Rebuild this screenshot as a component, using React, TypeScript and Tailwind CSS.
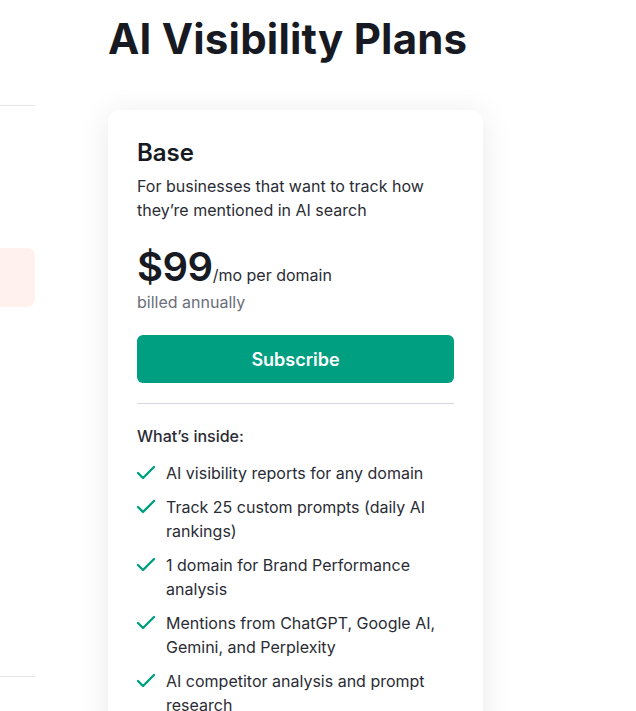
import { Check } from 'lucide-react'

const FEATURES = [
  'AI visibility reports for any domain',
  'Track 25 custom prompts (daily AI rankings)',
  '1 domain for Brand Performance analysis',
  'Mentions from ChatGPT, Google AI, Gemini, and Perplexity',
  'AI competitor analysis and prompt research',
]

export default function App() {
  return (
    <div className="w-[636px] h-[711px] overflow-hidden bg-white text-[#171a22] font-['Inter',sans-serif]">
      <h1 className="pl-[108px] pt-[14px] text-[42px] leading-[50px] font-bold tracking-[0.2px]">
        AI Visibility Plans
      </h1>

      <div className="mt-[41px] flex gap-[73px]">
        {/* edge of the previous card */}
        <div className="w-[35px] shrink-0">
          <div className="h-px bg-[#e4e5ea]" />
          <div className="mt-[142px] h-[59px] rounded-r-[8px] bg-[#fff1ee]" />
          <div className="mt-[369px] h-px bg-[#e4e5ea]" />
        </div>

        <div className="mt-[5px] w-[375px] shrink-0 rounded-[12px] bg-white px-[29px] pt-[27px] pb-10 shadow-[0_4px_32px_rgba(22,27,40,0.09)]">
          <h2 className="text-[24px] leading-[32px] font-semibold">Base</h2>
          <p className="mt-[5px] text-[16px] leading-[24px] text-[#2a2c35]">
            For businesses that want to track how they’re mentioned in AI search
          </p>

          <div className="mt-[21px] flex items-baseline">
            <span className="text-[40px] leading-[47px] font-semibold tracking-[-0.5px]">$99</span>
            <span className="text-[16px] leading-[24px] text-[#2a2c35]">/mo per domain</span>
          </div>
          <p className="text-[16px] leading-[24px] text-[#6c6e79]">billed annually</p>

          <button className="mt-[21px] h-[48px] w-full rounded-[6px] bg-[#009f81] text-[18px] font-semibold text-white">
            Subscribe
          </button>

          <div className="mt-[20px] h-px bg-[#d6d8de]" />

          <p className="mt-[20px] text-[16px] leading-[24px] font-medium text-[#2a2c35]">What’s inside:</p>

          <ul className="mt-[13px] flex flex-col gap-[10px]">
            {FEATURES.map((f) => (
              <li key={f} className="flex gap-[8px] text-[16px] leading-[24px] text-[#2a2c35]">
                <span className="-ml-[3px] flex h-[24px] w-[24px] shrink-0 items-center">
                  <Check size={24} strokeWidth={2.4} className="text-[#009f81]" />
                </span>
                <span>{f}</span>
              </li>
            ))}
          </ul>
        </div>
      </div>
    </div>
  )
}
